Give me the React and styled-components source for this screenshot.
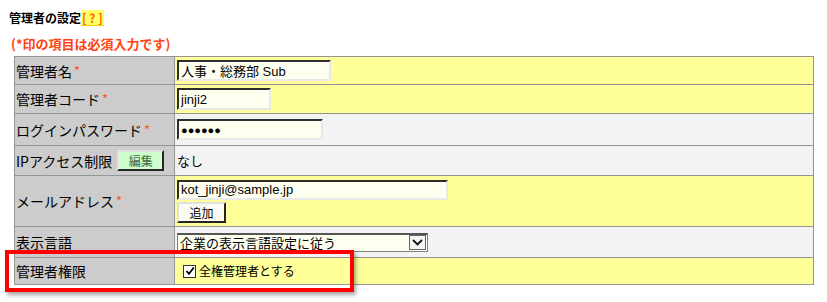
import React from "react";
import styled, { createGlobalStyle } from "styled-components";

const Global = createGlobalStyle`
  html, body { margin: 0; padding: 0; background: #fff; }
  body { font-family: "Noto Sans CJK JP", "Liberation Sans", sans-serif; color: #000; }
`;

const Page = styled.div`
  position: relative;
  padding: 8px 0 0 9px;
  width: 827px;
  height: 302px;
  box-sizing: border-box;
`;

const Title = styled.div`
  display: flex;
  align-items: center;
  height: 20px;
  font-size: 12px;
  font-weight: bold;
  line-height: 20px;
`;

const Help = styled.span`
  display: inline-block;
  background: #ffff66;
  color: #ff6600;
  font-size: 12px;
  line-height: 15px;
  padding: 0 1px;
  border-bottom: 1px solid #ffcc00;
  white-space: pre;
`;

const Notice = styled.div`
  margin: 8px 0 0 2px;
  font-size: 13px;
  font-weight: bold;
  color: #ff4411;
  line-height: 16px;
  height: 20px;
`;

const Table = styled.table`
  margin-left: 5px;
  border-collapse: collapse;
  width: 800px;
  font-size: 14px;
`;

const Row = styled.tr`
  height: ${(p) => p.$h}px;
`;

const Label = styled.th`
  width: 158px;
  background: #cccccc;
  border: 1px solid #959595;
  text-align: left;
  font-weight: normal;
  padding: 0 0 0 1px;
  font-size: 14px;
  line-height: 16px;
  white-space: nowrap;
`;

const Value = styled.td`
  background: ${(p) => (p.$alt ? "#f3f3f3" : "#ffff99")};
  border: 1px solid #959595;
  padding: 0 0 0 2px;
  font-size: 13px;
  line-height: 16px;
  vertical-align: middle;
`;

const Req = styled.span`
  color: #ff5522;
  font-size: 13px;
  margin-left: 2px;
  vertical-align: 1px;
`;

const Input = styled.input`
  box-sizing: border-box;
  width: ${(p) => p.$w}px;
  height: ${(p) => p.$h || 21}px;
  background: #fffff0;
  border: 2px inset #d8d8d8;
  border-top-color: #808080;
  border-left-color: #808080;
  border-right-color: #e8e8e8;
  border-bottom-color: #e8e8e8;
  font-family: "Liberation Sans", "Noto Sans CJK JP", sans-serif;
  font-size: ${(p) => p.$fs || 13}px;
  padding: 0 2px;
  margin: 0;
  display: block;
  color: #000;
  outline: none;
`;

const Btn = styled.button`
  box-sizing: border-box;
  height: 21px;
  width: ${(p) => p.$w}px;
  background: ${(p) => p.$bg || "#fbfbf2"};
  color: ${(p) => p.$fg || "#000"};
  border: 2px outset #e0e0e0;
  border-right-color: #7a7a7a;
  border-bottom-color: #7a7a7a;
  font-family: "Noto Sans CJK JP", sans-serif;
  font-size: 12px;
  line-height: 15px;
  padding: 0;
  margin: 0;
`;

const LabelFlex = styled.div`
  display: flex;
  align-items: center;
  gap: 5px;
`;

const Stack = styled.div`
  display: flex;
  flex-direction: column;
  gap: 2px;
  padding: 2px 0;
`;

const Select = styled.div`
  box-sizing: border-box;
  width: 251px;
  height: 19px;
  display: flex;
  align-items: center;
  background: #fffff0;
  border: 1px solid #808080;
  border-top: 2px solid #555;
  font-size: 13px;
  line-height: 15px;
  padding-left: 2px;
`;

const SelectText = styled.span`
  flex: 1;
`;

const Arrow = styled.span`
  width: 17px;
  height: 15px;
  box-sizing: border-box;
  border: 1px solid #666;
  background: #f4f4f4;
  display: flex;
  align-items: center;
  justify-content: center;
  margin-right: 1px;
`;

const Check = styled.label`
  display: flex;
  align-items: center;
  gap: 3px;
  font-size: 12px;
  padding-left: 6px;
`;

const Box = styled.span`
  width: 11px;
  height: 11px;
  border: 1px solid #333;
  background: #fff;
  display: inline-flex;
  align-items: center;
  justify-content: center;
`;

const Highlight = styled.div`
  position: absolute;
  left: 5px;
  top: 250px;
  width: 349px;
  height: 42px;
  box-sizing: border-box;
  border: 4px solid #ff0000;
  box-shadow: 2px 3px 4px rgba(0, 0, 0, 0.35);
  pointer-events: none;
`;

export default function App() {
  return (
    <>
      <Global />
      <Page>
        <Title>
          管理者の設定<Help>[ ? ]</Help>
        </Title>
        <Notice>(*印の項目は必須入力です)</Notice>
        <Table>
          <tbody>
            <Row $h={28}>
              <Label>管理者名<Req>*</Req></Label>
              <Value><Input $w={154} defaultValue="人事・総務部 Sub" /></Value>
            </Row>
            <Row $h={29}>
              <Label>管理者コード<Req>*</Req></Label>
              <Value><Input $w={94} $h={22} defaultValue="jinji2" /></Value>
            </Row>
            <Row $h={32}>
              <Label>ログインパスワード<Req>*</Req></Label>
              <Value $alt><Input $w={146} $fs={11} defaultValue="●●●●●●" /></Value>
            </Row>
            <Row $h={30}>
              <Label>
                <LabelFlex>
                  <span>IPアクセス制限</span>
                  <Btn $w={47} $bg="#ccffcc" $fg="#446644">編集</Btn>
                </LabelFlex>
              </Label>
              <Value $alt>なし</Value>
            </Row>
            <Row $h={51}>
              <Label>メールアドレス<Req>*</Req></Label>
              <Value>
                <Stack>
                  <Input $w={271} $h={20} defaultValue="kot_jinji@sample.jp" />
                  <Btn $w={49}>追加</Btn>
                </Stack>
              </Value>
            </Row>
            <Row $h={31}>
              <Label>表示言語</Label>
              <Value $alt>
                <Select>
                  <SelectText>企業の表示言語設定に従う</SelectText>
                  <Arrow>
                    <svg width="11" height="7" viewBox="0 0 11 7">
                      <path d="M1 1 L5.5 5.5 L10 1" stroke="#111" strokeWidth="1.8" fill="none" />
                    </svg>
                  </Arrow>
                </Select>
              </Value>
            </Row>
            <Row $h={27}>
              <Label>管理者権限</Label>
              <Value>
                <Check>
                  <Box>
                    <svg width="10" height="10" viewBox="0 0 10 10">
                      <path d="M1.5 5 L4 7.8 L8.8 1.5" stroke="#000" strokeWidth="1.8" fill="none" />
                    </svg>
                  </Box>
                  全権管理者とする
                </Check>
              </Value>
            </Row>
          </tbody>
        </Table>
        <Highlight />
      </Page>
    </>
  );
}
